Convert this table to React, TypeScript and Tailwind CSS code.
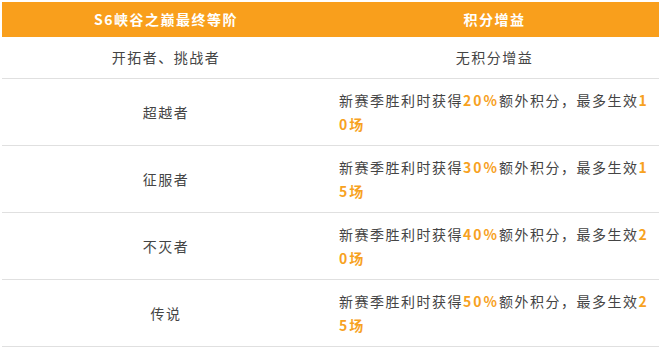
const ROWS = [
  { tier: '开拓者、挑战者', pct: '', games: '' },
  { tier: '超越者', pct: '20%', games: '10' },
  { tier: '征服者', pct: '30%', games: '15' },
  { tier: '不灭者', pct: '40%', games: '20' },
  { tier: '传说', pct: '50%', games: '25' },
];

export default function App() {
  return (
    <div className="w-[662px] h-[356px] bg-white pt-[2px] pl-[2px] font-['Noto_Sans_CJK_SC',sans-serif] text-[14px] tracking-[1.5px] text-[#444]">
      <div className="w-[657px]">
        {/* header */}
        <div className="grid grid-cols-[328px_329px] h-[35px] bg-[#f99f1c] text-white font-bold">
          <div className="flex items-center justify-center">S6峡谷之巅最终等阶</div>
          <div className="flex items-center justify-center">积分增益</div>
        </div>

        {ROWS.map((r, i) => (
          <div
            key={r.tier}
            className={`grid grid-cols-[328px_329px] border-b border-[#e0e0e0] ${i === 0 ? 'h-[42px]' : 'h-[67px]'}`}
          >
            <div className="flex items-center justify-center">{r.tier}</div>
            {i === 0 ? (
              <div className="flex items-center justify-center">无积分增益</div>
            ) : (
              <div className="flex items-center pl-[9px] pr-[6px] leading-[24px]">
                <p className="break-all">
                  新赛季胜利时获得<b className="text-[#f7a21f] tracking-[2px]">{r.pct}</b>额外积分，最多生效<b className="text-[#f7a21f] tracking-[2px]">{r.games}场</b>
                </p>
              </div>
            )}
          </div>
        ))}
      </div>
    </div>
  );
}
